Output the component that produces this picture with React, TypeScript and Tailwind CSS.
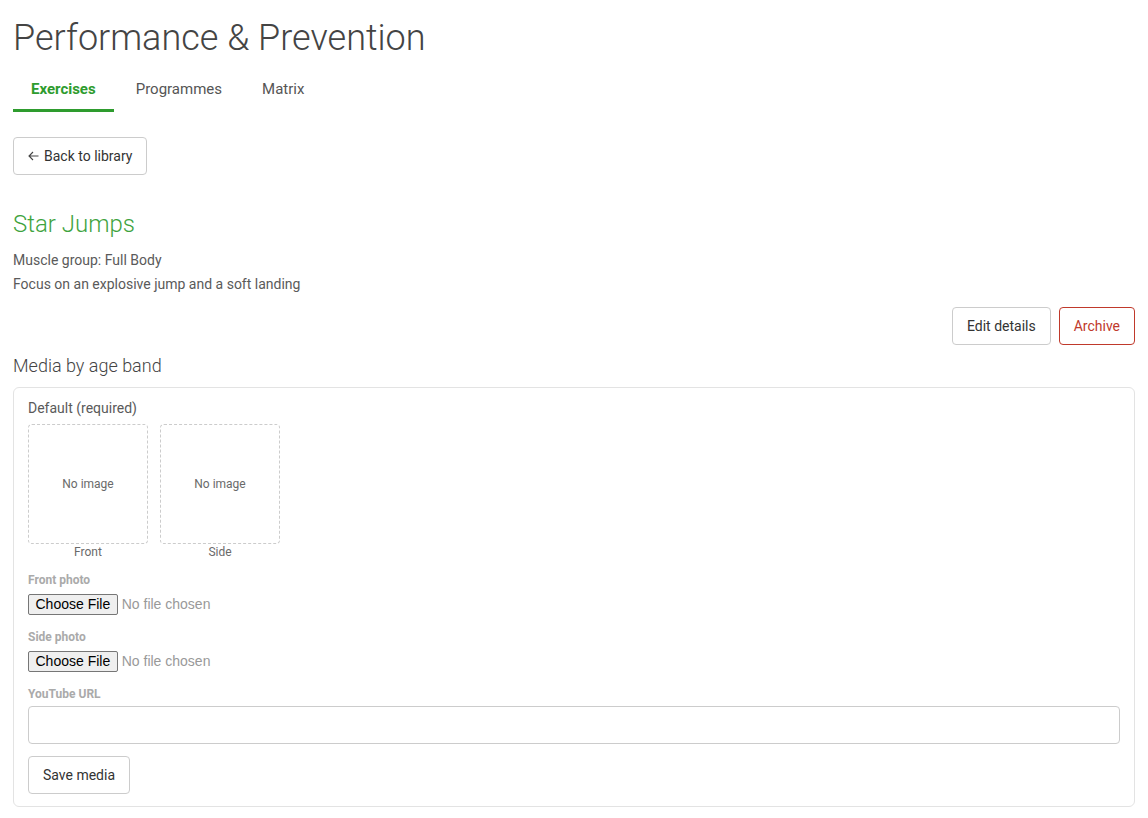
import React from "react";

function Btn({ children, className = "" }: { children: React.ReactNode; className?: string }) {
  return (
    <button
      type="button"
      className={`flex h-[38px] items-center rounded-[4px] border bg-white px-[14px] text-[14px] leading-[20px] ${className}`}
    >
      {children}
    </button>
  );
}

function FileField({ label, mt }: { label: string; mt: string }) {
  return (
    <div className={mt}>
      <div className="text-[12px] font-bold leading-[14px] text-[#aaaaaa]">{label}</div>
      <input
        type="file"
        className="mt-[7px] block h-[21px] font-['Liberation_Sans',Arial,sans-serif] text-[14px] leading-[17px] text-[#999999] file:mr-[4px] file:rounded-[2px] file:border file:border-solid file:border-[#767676] file:bg-[#efefef] file:px-[6.5px] file:py-px file:text-[14px] file:leading-[17px] file:text-black"
      />
    </div>
  );
}

function ImageSlot({ label }: { label: string }) {
  return (
    <div className="flex w-[120px] flex-col items-center">
      <div className="flex h-[120px] w-[120px] items-center justify-center rounded-[4px] border border-dashed border-[#cccccc] text-[12px] text-[#6a6a6a]">
        No image
      </div>
      <div className="mt-px text-[12px] leading-[14px] text-[#6a6a6a]">{label}</div>
    </div>
  );
}

export default function App() {
  return (
    <div className="min-h-[818px] bg-white px-[13px] pt-[17px] font-['Roboto',sans-serif] text-[#5a5a5a]">
      <h1 className="text-[36px] font-light leading-[43px] text-[#444444]">Performance &amp; Prevention</h1>

      <nav className="mt-[9px] flex gap-1 text-[15px]">
        <div className="border-b-[3px] border-[#2e9c2e] px-[18px] pb-[10px] pt-[10px] font-bold leading-[20px] text-[#2e9c2e]">
          Exercises
        </div>
        <div className="border-b-[3px] border-transparent px-[18px] pb-[10px] pt-[10px] leading-[20px] text-[#555555]">
          Programmes
        </div>
        <div className="border-b-[3px] border-transparent px-[18px] pb-[10px] pt-[10px] leading-[20px] text-[#555555]">
          Matrix
        </div>
      </nav>

      <div className="mt-[25px] flex">
        <Btn className="gap-[5px] border-[#cccccc] text-[#333333]">
          <svg width="11" height="10" viewBox="0 0 11 10" fill="none" stroke="#444444" strokeWidth="1.1">
            <path d="M10.5 5H1M5 1L1 5l4 4" />
          </svg>
          <span>Back to library</span>
        </Btn>
      </div>

      <h2 className="mt-[35px] text-[24px] font-light leading-[29px] text-[#3ea33e]">Star Jumps</h2>
      <div className="mt-[9px] text-[14px] leading-[24px] text-[#5a5a5a]">
        <p>Muscle group: Full Body</p>
        <p>Focus on an explosive jump and a soft landing</p>
      </div>

      <div className="mt-[11px] flex justify-end gap-2">
        <Btn className="border-[#cccccc] text-[#333333]">Edit details</Btn>
        <Btn className="border-[#c0392b] text-[#c0392b]">Archive</Btn>
      </div>

      <h3 className="mt-[10px] text-[18px] font-light leading-[22px] text-[#444444]">Media by age band</h3>

      <div className="mt-[10px] rounded-[6px] border border-[#e3e3e3] px-[14px] pb-[12px] pt-[12px]">
        <div className="text-[14px] leading-[16px] text-[#5a5a5a]">Default (required)</div>
        <div className="mt-2 flex gap-3">
          <ImageSlot label="Front" />
          <ImageSlot label="Side" />
        </div>

        <FileField label="Front photo" mt="mt-[14px]" />
        <FileField label="Side photo" mt="mt-[15px]" />

        <div className="mt-[15px]">
          <div className="text-[12px] font-bold leading-[14px] text-[#aaaaaa]">YouTube URL</div>
          <input
            type="text"
            className="mt-[5px] block h-[38px] w-full rounded-[4px] border border-[#cccccc] bg-white px-3 text-[14px] outline-none"
          />
        </div>

        <div className="mt-[12px] flex">
          <Btn className="border-[#cccccc] text-[#333333]">Save media</Btn>
        </div>
      </div>
    </div>
  );
}
